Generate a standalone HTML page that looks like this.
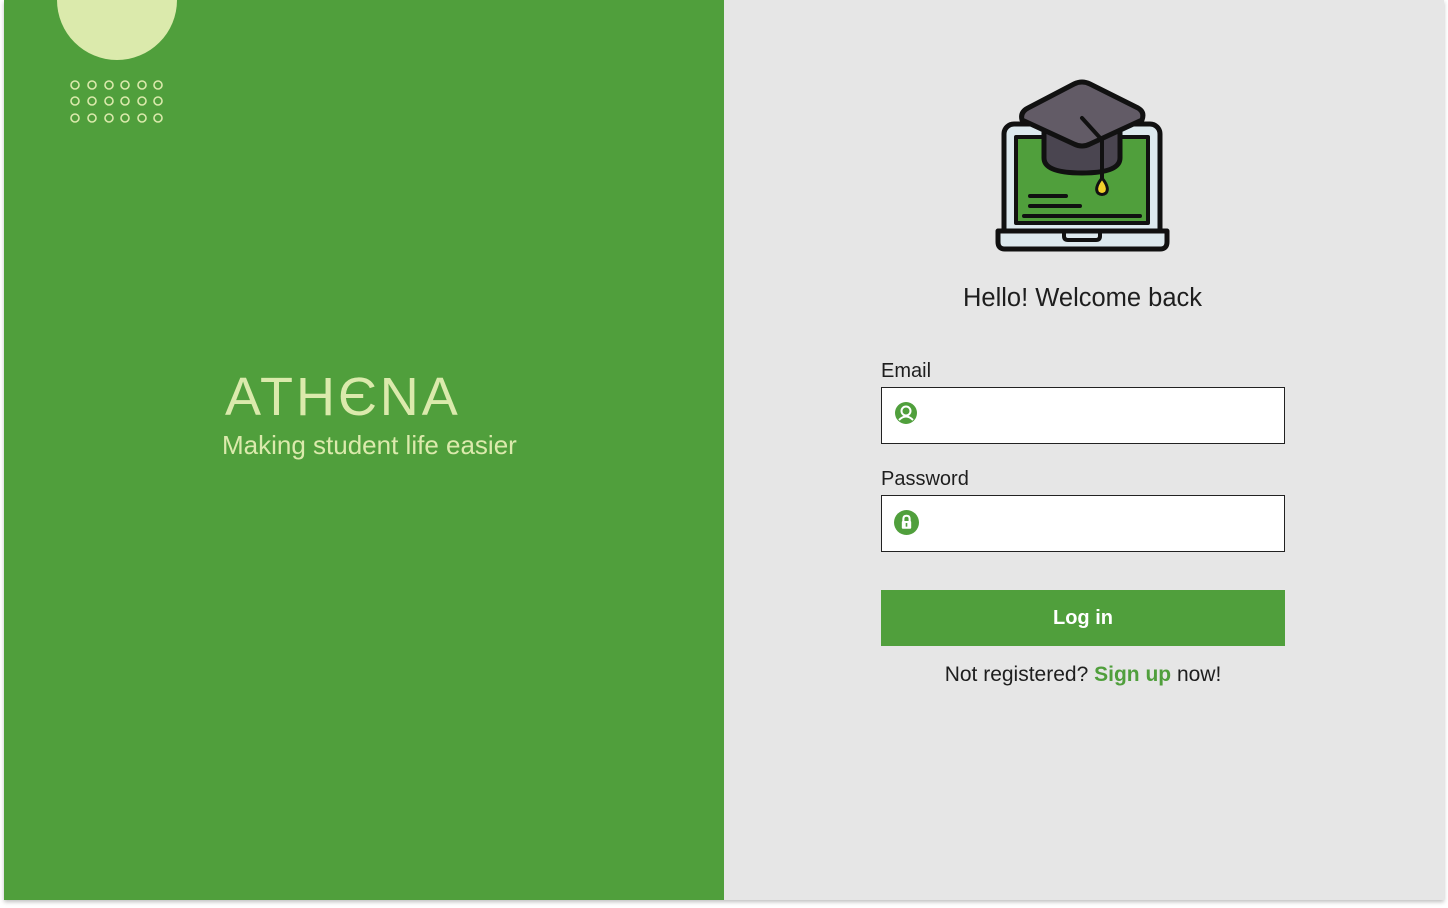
<!DOCTYPE html>
<html><head><meta charset="utf-8"><style>
*{margin:0;padding:0;box-sizing:border-box}
body{width:1448px;height:908px;background:#fff;font-family:"Liberation Sans",sans-serif;position:relative;overflow:hidden}
.wrap{position:absolute;left:4px;top:0;width:1440px;height:900px;box-shadow:0 2px 4px rgba(0,0,0,.25)}
.left{position:absolute;left:0;top:0;width:720px;height:900px;background:#509f3c;overflow:hidden}
.right{position:absolute;left:720px;top:0;width:720px;height:900px;background:#e6e6e6}
.t{position:absolute;color:#1e1e1e}
.box{position:absolute;left:881px;width:404px;height:57px;background:#fff;border:1px solid #222}
</style></head><body>
<div class="wrap">
<div class="left">
<div style="position:absolute;left:53px;top:-60px;width:120px;height:120px;border-radius:50%;background:#dbeaac"></div>
<svg style="position:absolute;left:0;top:0" width="200" height="140">
<g fill="none" stroke="#dbeaac" stroke-width="1.6">
<circle cx="71" cy="85" r="4"/><circle cx="88" cy="85" r="4"/><circle cx="105" cy="85" r="4"/><circle cx="121" cy="85" r="4"/><circle cx="138" cy="85" r="4"/><circle cx="154" cy="85" r="4"/>
<circle cx="71" cy="101" r="4"/><circle cx="88" cy="101" r="4"/><circle cx="105" cy="101" r="4"/><circle cx="121" cy="101" r="4"/><circle cx="138" cy="101" r="4"/><circle cx="154" cy="101" r="4"/>
<circle cx="71" cy="118" r="4"/><circle cx="88" cy="118" r="4"/><circle cx="105" cy="118" r="4"/><circle cx="121" cy="118" r="4"/><circle cx="138" cy="118" r="4"/><circle cx="154" cy="118" r="4"/>
</g></svg>
<div style="position:absolute;left:221px;top:366px;font-size:54px;color:#dbeaac;letter-spacing:3px">ATH&#1028;NA</div>
<div style="position:absolute;left:218px;top:430px;font-size:26px;color:#dbeaac">Making student life easier</div>
</div>
<div class="right"></div>
</div>
<svg style="position:absolute;left:990px;top:78px" width="185" height="178" viewBox="0 0 185 178" stroke-linecap="round" stroke-linejoin="round">
<rect x="14" y="46" width="156" height="122" rx="10" fill="#dde9ee" stroke="#111" stroke-width="5"/>
<rect x="26" y="59" width="132" height="86" fill="#509f3c" stroke="#111" stroke-width="4"/>
<path d="M8 153 H177 V164 Q177 171 170 171 H15 Q8 171 8 164 Z" fill="#dde9ee" stroke="#111" stroke-width="5"/>
<path d="M74 153 V158 Q74 162 78 162 H106 Q110 162 110 158 V153" fill="none" stroke="#111" stroke-width="4"/>
<path d="M54 52 V80 Q54 95 92 95 Q130 95 130 80 V52 Z" fill="#4a4550" stroke="#111" stroke-width="5"/>
<path d="M32 42 Q30 34 38 30 L84 6 Q92 2 100 6 L148 30 Q155 34 152 42 L100 66 Q92 70 84 66 Z" fill="#625b66" stroke="#111" stroke-width="5"/>
<path d="M92 40 L112 62 V100" fill="none" stroke="#111" stroke-width="4"/>
<path d="M112 100 Q104 110 108 115 Q112 118 116 115 Q120 110 112 100Z" fill="#f2d02c" stroke="#111" stroke-width="3"/>
<path d="M40 118 H76 M40 128 H90 M34 138 H150" stroke="#111" stroke-width="4"/>
</svg>
<div class="t" style="left:963px;top:284px;font-size:25.5px">Hello! Welcome back</div>
<div class="t" style="left:881px;top:360px;font-size:20px">Email</div>
<div class="box" style="top:387px"></div>
<svg style="position:absolute;left:894px;top:401px" width="24" height="24" viewBox="0 0 24 24"><circle cx="12" cy="12" r="11" fill="#509f3c"/><circle cx="12" cy="10" r="4.5" fill="none" stroke="#fff" stroke-width="2"/><path d="M5 19 Q12 12 19 19" fill="none" stroke="#fff" stroke-width="2"/></svg>
<div class="t" style="left:881px;top:468px;font-size:20px">Password</div>
<div class="box" style="top:495px"></div>
<svg style="position:absolute;left:894px;top:510px" width="25" height="25" viewBox="0 0 24 24"><circle cx="12" cy="12" r="12" fill="#509f3c"/><path d="M9 11 V8.5 Q9 5.5 12 5.5 Q15 5.5 15 8.5 V11" fill="none" stroke="#fff" stroke-width="2"/><rect x="7.5" y="10.5" width="9" height="7.5" rx="1" fill="#fff"/><rect x="11.2" y="12.5" width="1.6" height="3.5" fill="#509f3c"/></svg>
<div style="position:absolute;left:881px;top:590px;width:404px;height:56px;background:#509f3c;color:#fff;font-weight:bold;font-size:20px;text-align:center;line-height:56px">Log in</div>
<div class="t" style="left:881px;width:404px;top:663px;font-size:21px;text-align:center">Not registered? <b style="color:#509f3c">Sign up</b> now!</div>
</body></html>
